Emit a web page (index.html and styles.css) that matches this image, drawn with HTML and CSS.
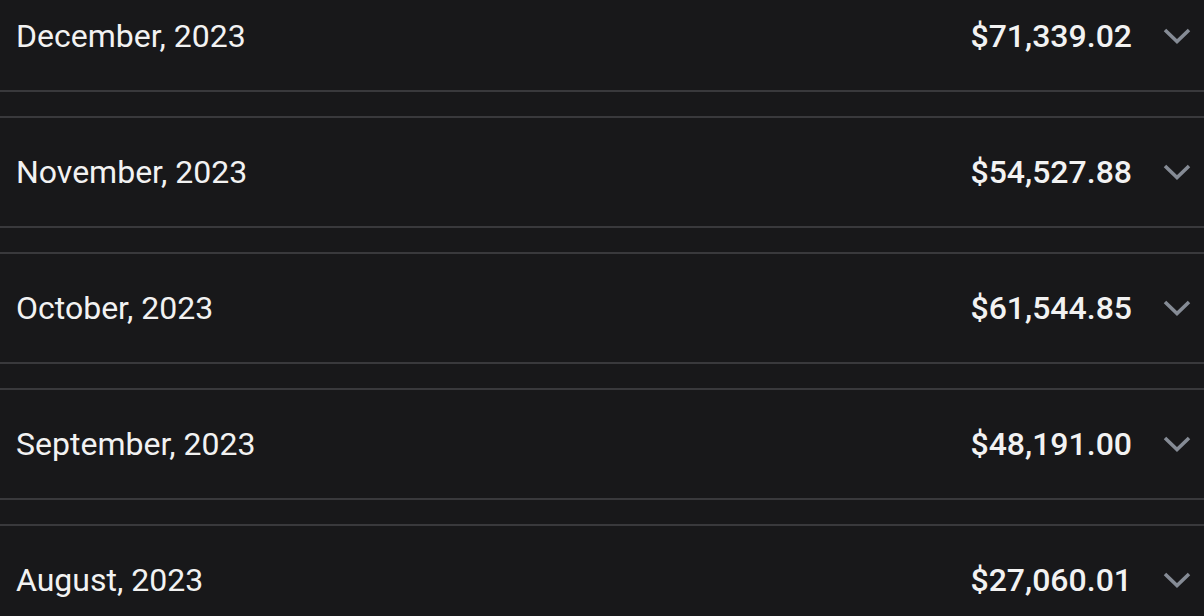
FILE: index.html
```html
<!DOCTYPE html>
<html lang="en">
<head>
    <meta charset="UTF-8">
    <title>Monthly totals</title>
    <link rel="stylesheet" href="styles.css">
</head>
<body>
    <div class="month-list">
        <div class="month-row">
            <span class="month-name">December, 2023</span>
            <span class="month-total">$71,339.02</span>
            <svg class="chevron" viewBox="0 0 28 16" width="28" height="16"><path d="M2 2 L14 13.5 L26 2" /></svg>
        </div>
        <div class="month-row">
            <span class="month-name">November, 2023</span>
            <span class="month-total">$54,527.88</span>
            <svg class="chevron" viewBox="0 0 28 16" width="28" height="16"><path d="M2 2 L14 13.5 L26 2" /></svg>
        </div>
        <div class="month-row">
            <span class="month-name">October, 2023</span>
            <span class="month-total">$61,544.85</span>
            <svg class="chevron" viewBox="0 0 28 16" width="28" height="16"><path d="M2 2 L14 13.5 L26 2" /></svg>
        </div>
        <div class="month-row">
            <span class="month-name">September, 2023</span>
            <span class="month-total">$48,191.00</span>
            <svg class="chevron" viewBox="0 0 28 16" width="28" height="16"><path d="M2 2 L14 13.5 L26 2" /></svg>
        </div>
        <div class="month-row">
            <span class="month-name">August, 2023</span>
            <span class="month-total">$27,060.01</span>
            <svg class="chevron" viewBox="0 0 28 16" width="28" height="16"><path d="M2 2 L14 13.5 L26 2" /></svg>
        </div>
    </div>
</body>
</html>
```

FILE: styles.css
```css
* {
    box-sizing: border-box;
    margin: 0;
    padding: 0;
}

body {
    font-family: Roboto, "Noto Sans", sans-serif;
    background-color: #18181a;
    color: #f2f2f2;
    overflow: hidden;
}

.month-list {
    display: flex;
    flex-direction: column;
    gap: 24px;
    margin-top: -20px;
}

.month-row {
    display: flex;
    align-items: center;
    height: 112px;
    padding: 0 13px 0 16px;
    border-top: 2px solid #39393c;
    border-bottom: 2px solid #39393c;
}

.month-name {
    flex: 1;
    font-size: 32px;
}

.month-total {
    font-size: 32px;
    font-weight: 500;
}

.chevron {
    margin-left: 31px;
    fill: none;
    stroke: #858b95;
    stroke-width: 3.6;
}
```
